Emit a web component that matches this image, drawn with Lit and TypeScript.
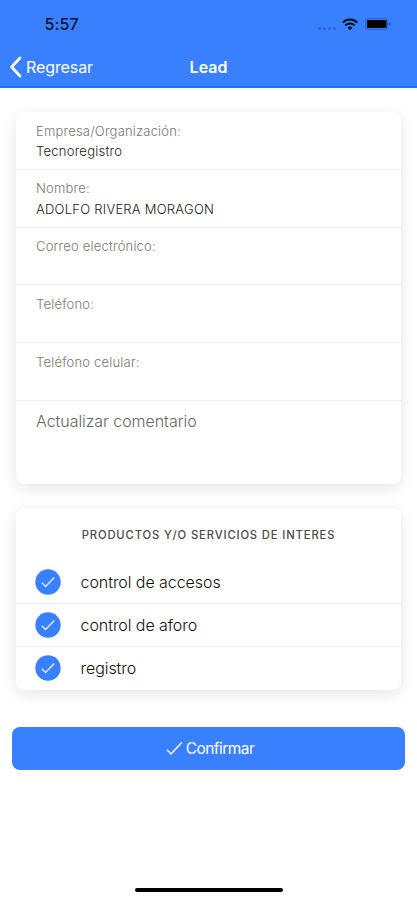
import { LitElement, html, css, svg } from "lit";
import { customElement } from "lit/decorators.js";

interface Field {
  label: string;
  value: string;
}

const FIELDS: Field[] = [
  { label: "Empresa/Organización:", value: "Tecnoregistro" },
  { label: "Nombre:", value: "ADOLFO RIVERA MORAGON" },
  { label: "Correo electrónico:", value: "" },
  { label: "Teléfono:", value: "" },
  { label: "Teléfono celular:", value: "" },
];

const PRODUCTS = ["control de accesos", "control de aforo", "registro"];

const wifi = svg`<svg class="wifi" width="16" height="13" viewBox="0 0 16 13">
  <path d="M0.8 4.6C4.8 0.5 11.2 0.5 15.2 4.6" fill="none" stroke="#050a18" stroke-width="2"/>
  <path d="M3.3 7.4C6 4.8 10 4.8 12.7 7.4" fill="none" stroke="#050a18" stroke-width="1.9"/>
  <path d="M5.5 9.4C7 8.2 9 8.2 10.5 9.4L8 12.3Z" fill="#050a18"/>
</svg>`;

const battery = svg`<svg class="battery" width="26" height="12" viewBox="0 0 26 12">
  <rect x="0.5" y="0.5" width="22" height="11" rx="3" fill="none" stroke="#1c4390" stroke-opacity=".55"/>
  <rect x="2" y="2" width="19.5" height="8" rx="1" fill="#000"/>
  <path d="M24 4.2C25.6 4.9 25.6 7.1 24 7.8Z" fill="#1c4390"/>
</svg>`;

@customElement("app-root")
export class AppRoot extends LitElement {
  static styles = css`
    :host {
      display: flex;
      flex-direction: column;
      width: 100%;
      height: 900px;
      box-sizing: border-box;
      overflow: hidden;
      background: #fff;
      font-family: Inter, "Liberation Sans", sans-serif;
      color: #333;
    }
    header {
      flex: none;
      height: 88px;
      box-sizing: border-box;
      background: #3880ff;
      border-bottom: 2px solid #1477fb;
    }
    .status {
      display: flex;
      align-items: center;
      height: 48px;
      padding: 0 26px 0 44.5px;
    }
    .time {
      flex: 1;
      font-size: 16px;
      font-weight: 500;
      color: #07132c;
      letter-spacing: 0.1px;
    }
    .dots {
      display: flex;
      gap: 2px;
      margin: 8px 6px 0 0;
    }
    .dots i {
      width: 3px;
      height: 3px;
      border-radius: 50%;
      background: #2c66cc;
    }
    .wifi {
      margin-right: 7px;
    }
    .toolbar {
      display: grid;
      grid-template-columns: 1fr auto 1fr;
      align-items: center;
      height: 38px;
      padding: 0 9px;
      color: #fff;
      font-size: 16px;
    }
    .back {
      display: flex;
      align-items: center;
      gap: 4px;
      letter-spacing: -0.1px;
    }
    .title {
      font-weight: 600;
    }
    .card {
      flex: none;
      box-sizing: border-box;
      margin: 0 16px;
      border-radius: 8px;
      background: #fff;
      box-shadow: 0 4px 16px rgba(0, 0, 0, 0.1);
    }
    .form {
      margin-top: 24px;
      height: 372px;
    }
    .field {
      height: 57.8px;
      box-sizing: border-box;
      padding: 8.6px 20px 0;
      border-bottom: 1px solid #eeeeee;
      font-size: 13px;
      letter-spacing: 0.2px;
    }
    .label {
      height: 20.4px;
      line-height: 20px;
      font-weight: 300;
      color: #777;
    }
    .value {
      line-height: 20px;
      font-weight: 350;
      letter-spacing: 0.25px;
      color: #222;
    }
    .comment {
      padding: 9px 20px;
      line-height: 22px;
      font-size: 16px;
      font-weight: 300;
      letter-spacing: -0.05px;
      color: #666;
    }
    .products {
      margin-top: 24px;
      height: 182px;
    }
    h2 {
      margin: 0;
      height: 53px;
      line-height: 54px;
      text-align: center;
      font-size: 11.25px;
      font-weight: 500;
      letter-spacing: 0.85px;
      color: #4a4a4a;
    }
    .item {
      display: flex;
      align-items: center;
      gap: 19.5px;
      height: 43px;
      box-sizing: border-box;
      padding-left: 19px;
      border-bottom: 1px solid #eeeeee;
      font-size: 16px;
      font-weight: 300;
      letter-spacing: -0.06px;
      color: #111;
    }
    .item:last-child {
      border-bottom: 0;
      height: 42px;
    }
    .confirm {
      flex: none;
      display: flex;
      align-items: center;
      justify-content: center;
      gap: 3px;
      margin: 37px 12px 0;
      height: 43px;
      border: 0;
      border-radius: 8px;
      background: #3880ff;
      color: #fff;
      font: 400 15.5px Inter, "Liberation Sans", sans-serif;
      letter-spacing: -0.55px;
    }
    .confirm svg {
      margin-left: 3px;
    }
    .home {
      flex: none;
      width: 148px;
      height: 4px;
      margin: auto auto 8px;
      border-radius: 2px;
      background: #000;
    }
  `;

  render() {
    return html`
      <header>
        <div class="status">
          <span class="time">5:57</span>
          <span class="dots"><i></i><i></i><i></i><i></i></span>
          ${wifi}${battery}
        </div>
        <div class="toolbar">
          <span class="back">
            <svg width="13" height="22" viewBox="0 0 13 22">
              <path d="M11 2L2.6 11L11 20" fill="none" stroke="#fff" stroke-width="2.8" stroke-linecap="round" stroke-linejoin="round" />
            </svg>
            <span>Regresar</span>
          </span>
          <span class="title">Lead</span>
        </div>
      </header>
      <section class="card form">
        ${FIELDS.map(
          (f) => html`<div class="field">
            <div class="label">${f.label}</div>
            <div class="value">${f.value}</div>
          </div>`,
        )}
        <div class="comment">Actualizar comentario</div>
      </section>
      <section class="card products">
        <h2>PRODUCTOS Y/O SERVICIOS DE INTERES</h2>
        ${PRODUCTS.map(
          (p) => html`<div class="item">
            <svg width="26" height="26" viewBox="0 0 26 26">
              <circle cx="13" cy="13" r="12.7" fill="#3880ff" />
              <path d="M6.8 13.8L10.6 17.4L19.2 8.6" fill="none" stroke="#e4eeff" stroke-width="1.4" />
            </svg>
            <span>${p}</span>
          </div>`,
        )}
      </section>
      <button class="confirm">
        <svg width="17" height="15" viewBox="0 0 17 15">
          <path d="M1 8.8L5 13L15.8 1.4" fill="none" stroke="#fff" stroke-width="1.4" />
        </svg>
        <span>Confirmar</span>
      </button>
      <div class="home"></div>
    `;
  }
}
